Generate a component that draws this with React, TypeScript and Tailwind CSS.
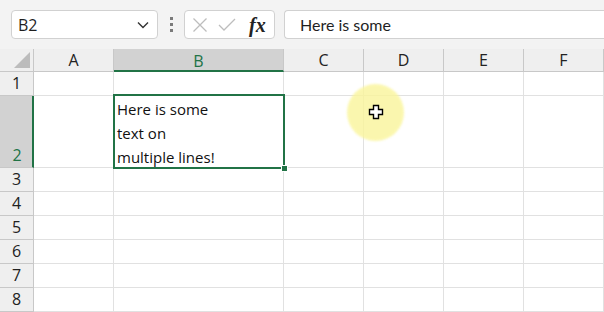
import React from 'react';

const cols = [
    { key: 'A', width: 80 },
    { key: 'B', width: 170 },
    { key: 'C', width: 80 },
    { key: 'D', width: 80 },
    { key: 'E', width: 80 },
    { key: 'F', width: 80 },
];

const rows = [
    { n: 1, h: 24 },
    { n: 2, h: 72 },
    { n: 3, h: 24 },
    { n: 4, h: 24 },
    { n: 5, h: 24 },
    { n: 6, h: 24 },
    { n: 7, h: 24 },
    { n: 8, h: 24 },
];

const uiFont = { fontFamily: '"Open Sans", "Noto Sans", sans-serif' };

function Toolbar() {
    return (
        <div className="flex h-[49px] items-start bg-[#f3f3f3] pt-[10px] pl-[11px]">
            <div className="flex h-[29px] w-[147px] items-center justify-between rounded-[4px] border border-[#d1d1d1] bg-white pl-[6px] pr-[8px]">
                <span className="text-[16px] text-[#1f1f1f]" style={uiFont}>B2</span>
                <svg width="12" height="8" viewBox="0 0 12 8" fill="none">
                    <path d="M1 1.5 L6 6.5 L11 1.5" stroke="#333" strokeWidth="1.4" />
                </svg>
            </div>
            <div className="flex h-[29px] w-[26px] flex-col items-center justify-center gap-[3px]">
                <span className="h-[3px] w-[3px] bg-[#7a7a7a]" />
                <span className="h-[3px] w-[3px] bg-[#7a7a7a]" />
                <span className="h-[3px] w-[3px] bg-[#7a7a7a]" />
            </div>
            <div className="flex h-[29px] w-[91px] items-center rounded-[4px] border border-[#d1d1d1] bg-white pl-[6px]">
                <svg width="16" height="16" viewBox="0 0 16 16" fill="none" className="ml-[1px]">
                    <path d="M1.5 1.5 L14.5 14.5 M14.5 1.5 L1.5 14.5" stroke="#bdbdbd" strokeWidth="1.3" />
                </svg>
                <svg width="18" height="14" viewBox="0 0 18 14" fill="none" className="ml-[10px]">
                    <path d="M1 7 L6 12 L17 1" stroke="#bdbdbd" strokeWidth="1.3" />
                </svg>
                <span
                    className="ml-[13px] text-[20px] font-bold italic leading-none text-[#222]"
                    style={{ fontFamily: '"Liberation Serif", "DejaVu Serif", serif' }}
                >
                    fx
                </span>
            </div>
            <div className="ml-[9px] flex h-[29px] flex-1 items-center rounded-l-[4px] border border-r-0 border-[#d1d1d1] bg-white pl-[15px]">
                <span className="text-[16px] text-[#1f1f1f]" style={{ fontFamily: 'Lato, "Open Sans", sans-serif' }}>
                    Here is some
                </span>
            </div>
        </div>
    );
}

function Grid() {
    return (
        <div
            className="grid bg-white"
            style={{
                gridTemplateColumns: `34px ${cols.map((c) => `${c.width}px`).join(' ')}`,
                gridTemplateRows: `23px ${rows.map((r) => `${r.h}px`).join(' ')}`,
            }}
        >
            {/* corner */}
            <div className="relative border-r border-b border-[#c8c8c8] bg-[#efefef]">
                <svg width="16" height="16" viewBox="0 0 16 16" className="absolute right-[3px] bottom-[3px]">
                    <path d="M16 0 L16 16 L0 16 Z" fill="#bcbcbc" />
                </svg>
            </div>
            {cols.map((c) =>
                c.key === 'B' ? (
                    <div
                        key={c.key}
                        className="flex items-center justify-center border-r border-b-2 border-r-[#c8c8c8] border-b-[#217346] bg-[#d2d2d2] pt-[2px] text-[16px] text-[#217346]"
                        style={uiFont}
                    >
                        {c.key}
                    </div>
                ) : (
                    <div
                        key={c.key}
                        className="flex items-center justify-center border-r border-b border-[#c8c8c8] bg-[#efefef] text-[16px] text-[#222]"
                        style={uiFont}
                    >
                        {c.key}
                    </div>
                )
            )}
            {rows.map((r) => (
                <React.Fragment key={r.n}>
                    {r.n === 2 ? (
                        <div
                            className="flex items-end justify-center border-r-2 border-b border-r-[#217346] border-b-[#c8c8c8] bg-[#d2d2d2] pb-[1px] pl-[2px] text-[16px] leading-[22px] text-[#217346]"
                            style={uiFont}
                        >
                            {r.n}
                        </div>
                    ) : (
                        <div
                            className="flex items-end justify-center border-r border-b border-[#c8c8c8] bg-[#efefef] pb-[1px] text-[16px] leading-[22px] text-[#222]"
                            style={uiFont}
                        >
                            {r.n}
                        </div>
                    )}
                    {cols.map((c) => (
                        <div
                            key={c.key}
                            className={`relative border-r border-b border-[#e1e1e1] ${r.n === 2 && c.key === 'B' ? 'z-10' : ''}`}
                        >
                            {r.n === 2 && c.key === 'B' && (
                                <>
                                    <div className="absolute top-[-2px] left-[-1px] right-[-2px] bottom-[-2px] border-2 border-[#217346]" />
                                    <div
                                        className="relative pl-[3px] pt-[1px] text-[15px] leading-[24px] text-[#111]"
                                        style={uiFont}
                                    >
                                        Here is some
                                        <br />
                                        text on
                                        <br />
                                        multiple lines!
                                    </div>
                                    <div className="absolute right-[-5px] bottom-[-5px] h-[7px] w-[7px] border border-white bg-[#217346]" />
                                </>
                            )}
                        </div>
                    ))}
                </React.Fragment>
            ))}
        </div>
    );
}

export default function App() {
    return (
        <div className="relative h-[312px] w-[604px] overflow-hidden bg-white">
            <Toolbar />
            <Grid />
            {/* cursor highlight */}
            <div className="pointer-events-none absolute z-20 left-[347px] top-[84px] h-[57px] w-[57px] rounded-full bg-[#faf59a] opacity-80 blur-[1px]" />
            <svg width="16" height="16" viewBox="0 0 16 16" className="pointer-events-none absolute z-20 left-[368px] top-[104px]">
                <path
                    d="M5.5 1.5 H10.5 V5.5 H14.5 V10.5 H10.5 V14.5 H5.5 V10.5 H1.5 V5.5 H5.5 Z"
                    fill="#fff"
                    stroke="#000"
                    strokeWidth="1.4"
                />
            </svg>
        </div>
    );
}
